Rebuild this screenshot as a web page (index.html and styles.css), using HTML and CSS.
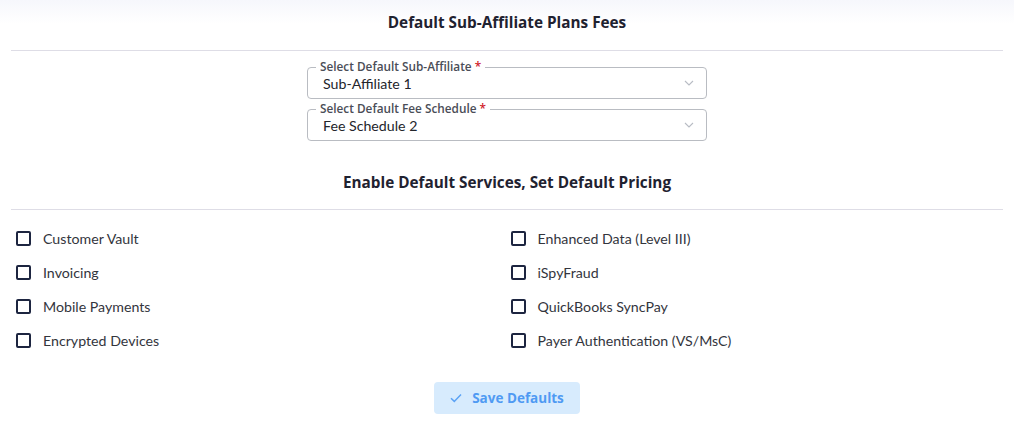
FILE: index.html
```html
<!DOCTYPE html>
<html>
<head>
<meta charset="utf-8">
<link rel="stylesheet" href="styles.css">
</head>
<body>
<div class="page">
  <div class="topfade"></div>
  <h2 class="section-title first">Default Sub-Affiliate Plans Fees</h2>
  <hr class="divider">
  <div class="selects">
    <div class="field">
      <span class="field-label">Select Default Sub-Affiliate <span class="req">*</span></span>
      <span class="field-value">Sub-Affiliate 1</span>
      <svg class="chev" viewBox="0 0 10 6" width="10" height="6"><path d="M1 1l4 4 4-4" fill="none" stroke="#b8bcc4" stroke-width="1.1"/></svg>
    </div>
    <div class="field">
      <span class="field-label">Select Default Fee Schedule <span class="req">*</span></span>
      <span class="field-value">Fee Schedule 2</span>
      <svg class="chev" viewBox="0 0 10 6" width="10" height="6"><path d="M1 1l4 4 4-4" fill="none" stroke="#b8bcc4" stroke-width="1.1"/></svg>
    </div>
  </div>
  <h2 class="section-title second">Enable Default Services, Set Default Pricing</h2>
  <hr class="divider">
  <div class="services">
    <label class="svc"><span class="box"></span><span>Customer Vault</span></label>
    <label class="svc"><span class="box"></span><span>Enhanced Data (Level III)</span></label>
    <label class="svc"><span class="box"></span><span>Invoicing</span></label>
    <label class="svc"><span class="box"></span><span>iSpyFraud</span></label>
    <label class="svc"><span class="box"></span><span>Mobile Payments</span></label>
    <label class="svc"><span class="box"></span><span>QuickBooks SyncPay</span></label>
    <label class="svc"><span class="box"></span><span>Encrypted Devices</span></label>
    <label class="svc"><span class="box"></span><span>Payer Authentication (VS/MsC)</span></label>
  </div>
  <div class="actions">
    <button class="save"><svg viewBox="0 0 12 10" width="12" height="10"><path d="M1 5.2l3.3 3.2L11 1.5" fill="none" stroke="#5aa2f5" stroke-width="1.5"/></svg>Save Defaults</button>
  </div>
</div>
</body>
</html>
```
FILE: styles.css
```css
* { box-sizing: border-box; }
html, body { margin: 0; padding: 0; background: #fff; }
body { font-family: Lato, "Noto Sans", sans-serif; color: #2b2d33; }
.page { position: relative; padding: 0 11px; width: 1014px; height: 426px; overflow: hidden; }
.topfade { position: absolute; left: 0; top: 0; right: 0; height: 24px; background: linear-gradient(#f6f7fc, #ffffff); }
.section-title { position: relative; margin: 0; text-align: center; font-family: "Open Sans", sans-serif; font-size: 15.3px; font-weight: 700; color: #1f2230; line-height: 20px; }
.section-title.first { padding-top: 12px; padding-bottom: 18px; }
.section-title.second { padding-top: 31px; padding-bottom: 17px; }
.divider { margin: 0; border: 0; border-top: 1px solid #dedde6; }
.selects { display: flex; flex-direction: column; align-items: center; gap: 10px; padding-top: 16px; }
.field { position: relative; width: 400px; height: 32px; border: 1px solid #b9bcc2; border-radius: 4px; display: flex; align-items: center; padding: 0 16px 0 15px; justify-content: space-between; }
.field-label { position: absolute; left: 8px; top: -9px; background: #fff; padding: 0 4px; font-family: "Open Sans", sans-serif; font-size: 11.8px; font-weight: 600; color: #4a4d57; line-height: 15px; }
.req { color: #d0202a; }
.field-value { font-size: 14.2px; color: #23252b; }
.chev { margin-right: -4px; }
.services { display: grid; grid-template-columns: 1fr 1fr; row-gap: 14px; padding: 18px 0 0 5px; }
.svc { display: flex; align-items: center; gap: 12px; font-size: 14.2px; color: #33353d; height: 20px; }
.svc:nth-child(even) { padding-left: 1px; }
.box { width: 15px; height: 15px; border: 2px solid #1d2540; border-radius: 2px; flex: none; }
.actions { display: flex; justify-content: center; padding-top: 32px; }
.save { display: flex; align-items: center; gap: 10px; width: 146px; height: 32px; justify-content: center; border: 0; border-radius: 4px; background: #d7ebfd; color: #4f9af3; font-family: "Open Sans", sans-serif; font-size: 13.5px; font-weight: 700; padding: 0; }
```
